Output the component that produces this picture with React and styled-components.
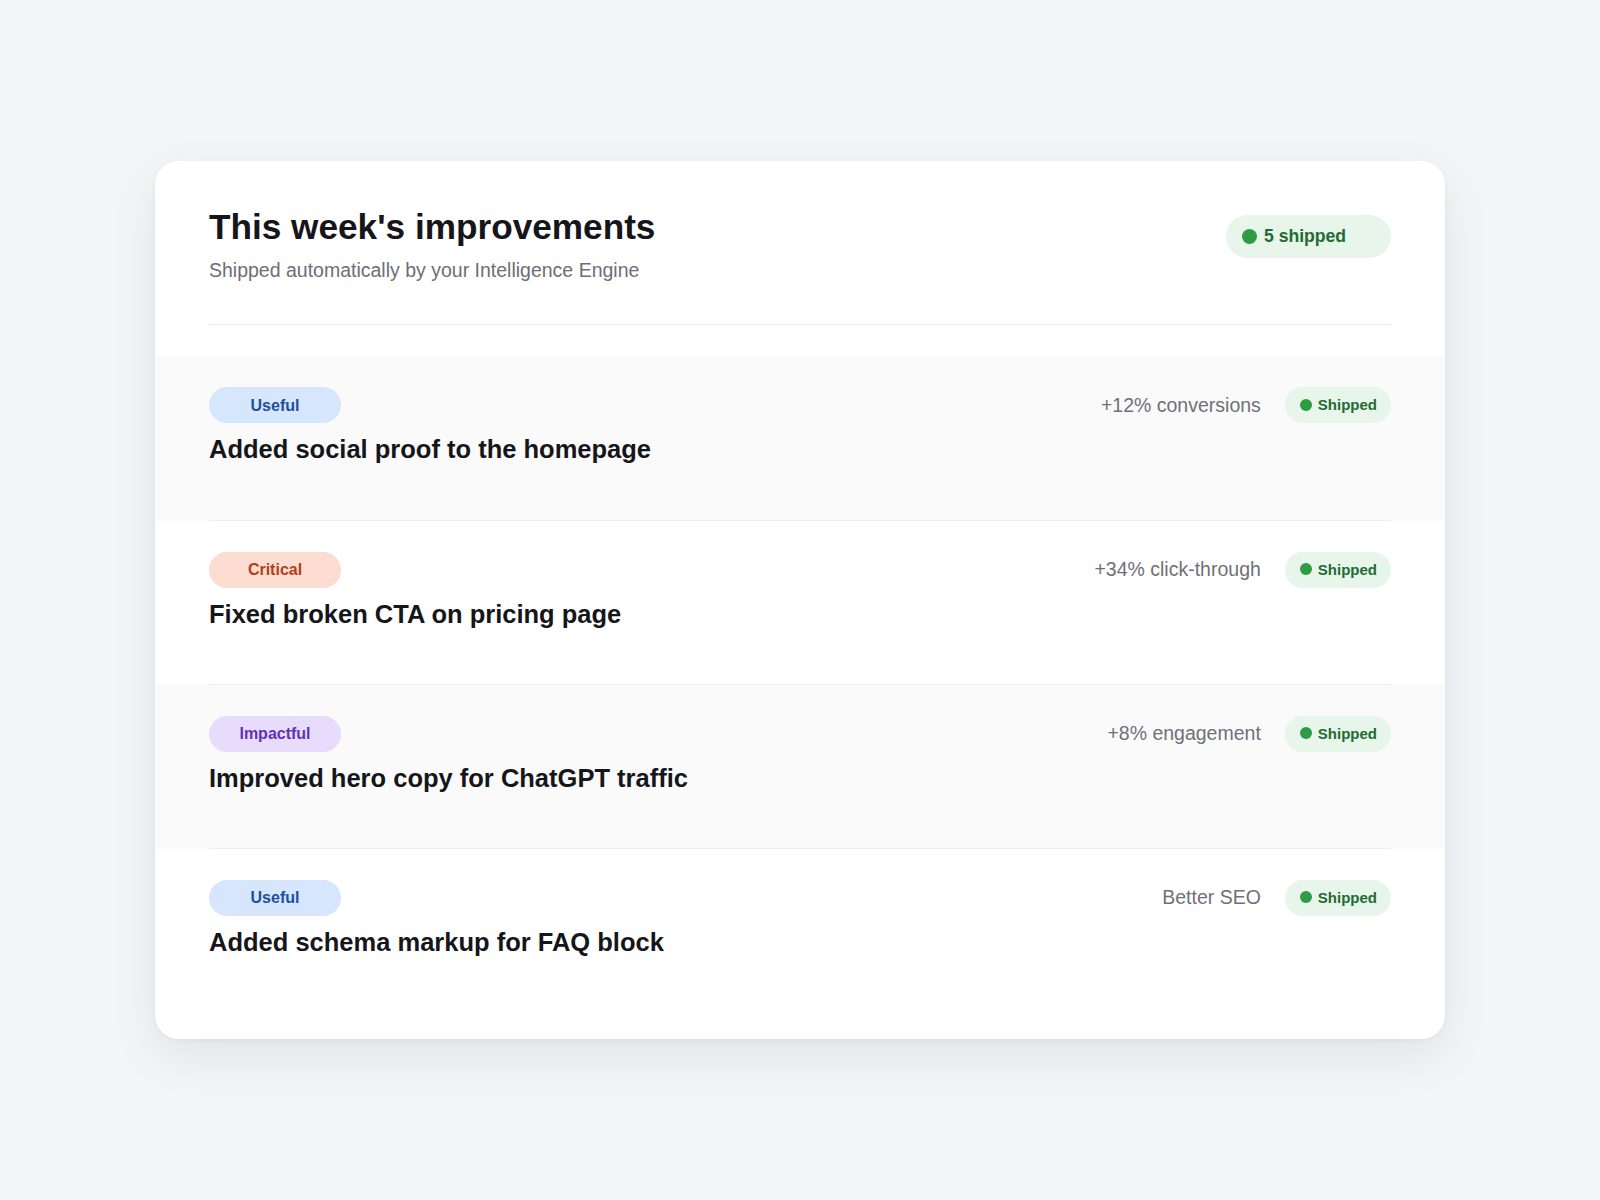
import React from "react";
import styled, { createGlobalStyle } from "styled-components";

const GlobalStyle = createGlobalStyle`
  html, body {
    margin: 0;
    padding: 0;
    background: #f4f5f7;
    font-family: "Liberation Sans", Arial, sans-serif;
  }
`;

const Page = styled.div`
  min-height: 100vh;
  display: flex;
  align-items: center;
  justify-content: center;
`;

const Card = styled.div`
  width: 1290px;
  background: #ffffff;
  border-radius: 24px;
  padding: 45px 0 27px;
  box-sizing: border-box;
  box-shadow: 0 18px 48px rgba(20, 20, 40, 0.08), 0 2px 6px rgba(20, 20, 40, 0.04);
  overflow: hidden;
`;

const Header = styled.div`
  display: flex;
  justify-content: space-between;
  align-items: flex-start;
  padding: 0 54px;
`;

const Title = styled.h1`
  margin: 0;
  font-size: 35.2px;
  line-height: 1.2;
  font-weight: 700;
  color: #16161a;
`;

const Subtitle = styled.p`
  margin: 9px 0 0;
  font-size: 19.5px;
  line-height: 1.4;
  color: #6e6e76;
`;

const Dot = styled.span`
  width: ${(p) => p.size}px;
  height: ${(p) => p.size}px;
  border-radius: 50%;
  background: #2e9c45;
  flex-shrink: 0;
`;

const CountPill = styled.div`
  margin-top: 9px;
  width: 165px;
  height: 43px;
  box-sizing: border-box;
  padding: 0 16px;
  border-radius: 22px;
  background: #e8f5ea;
  display: flex;
  align-items: center;
  gap: 7px;
  font-size: 17.6px;
  font-weight: 700;
  color: #226b34;
`;

const Divider = styled.div`
  height: 1px;
  background: #ebebee;
  margin: 40px 54px 31px;
`;

const Row = styled.div`
  background: ${(p) => (p.shaded ? "#fafafb" : "#ffffff")};
`;

const RowInner = styled.div`
  margin: 0 54px;
  padding: 31px 0 53px;
  border-bottom: ${(p) => (p.last ? "none" : "1px solid #ededf0")};
`;

const RowTop = styled.div`
  display: flex;
  justify-content: space-between;
  align-items: center;
`;

const tagColors = {
  Useful: { bg: "#d5e6fd", fg: "#1e4f9e" },
  Critical: { bg: "#fddcd1", fg: "#b23f1c" },
  Impactful: { bg: "#e8dcfd", fg: "#6331b3" },
};

const Tag = styled.span`
  width: 132px;
  height: 36px;
  padding-top: 1px;
  box-sizing: border-box;
  border-radius: 18px;
  display: inline-flex;
  align-items: center;
  justify-content: center;
  font-size: 16px;
  font-weight: 700;
  background: ${(p) => tagColors[p.kind].bg};
  color: ${(p) => tagColors[p.kind].fg};
`;

const Meta = styled.div`
  display: flex;
  align-items: center;
  gap: 24px;
`;

const Metric = styled.span`
  font-size: 19.5px;
  color: #707078;
`;

const StatusPill = styled.span`
  height: 36px;
  box-sizing: border-box;
  padding: 0 14px 1px 15px;
  border-radius: 18px;
  background: #e8f5ea;
  display: inline-flex;
  align-items: center;
  gap: 6px;
  font-size: 15px;
  font-weight: 700;
  color: #226b34;
`;

const ItemTitle = styled.h2`
  margin: 10px 0 0;
  font-size: 25.5px;
  line-height: 1.3;
  font-weight: 700;
  color: #16161a;
`;

const items = [
  { tag: "Useful", title: "Added social proof to the homepage", metric: "+12% conversions" },
  { tag: "Critical", title: "Fixed broken CTA on pricing page", metric: "+34% click-through" },
  { tag: "Impactful", title: "Improved hero copy for ChatGPT traffic", metric: "+8% engagement" },
  { tag: "Useful", title: "Added schema markup for FAQ block", metric: "Better SEO" },
];

export default function App() {
  return (
    <Page>
      <GlobalStyle />
      <Card>
        <Header>
          <div>
            <Title>This week's improvements</Title>
            <Subtitle>Shipped automatically by your Intelligence Engine</Subtitle>
          </div>
          <CountPill>
            <Dot size={15} />
            5 shipped
          </CountPill>
        </Header>
        <Divider />
        {items.map((item, i) => (
          <Row key={i} shaded={i % 2 === 0}>
            <RowInner last={i === items.length - 1}>
              <RowTop>
                <Tag kind={item.tag}>{item.tag}</Tag>
                <Meta>
                  <Metric>{item.metric}</Metric>
                  <StatusPill>
                    <Dot size={12} />
                    Shipped
                  </StatusPill>
                </Meta>
              </RowTop>
              <ItemTitle>{item.title}</ItemTitle>
            </RowInner>
          </Row>
        ))}
      </Card>
    </Page>
  );
}
